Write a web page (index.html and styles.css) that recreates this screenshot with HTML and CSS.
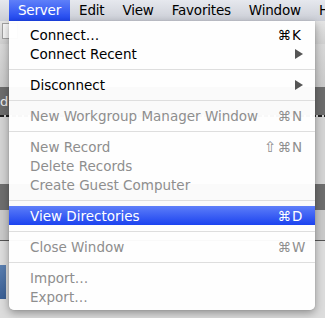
FILE: index.html
```html
<!DOCTYPE html>
<html>
<head>
<meta charset="utf-8">
<link rel="stylesheet" href="styles.css">
</head>
<body>
<div class="menubar">
  <span class="mb-item active">Server</span>
  <span class="mb-item">Edit</span>
  <span class="mb-item">View</span>
  <span class="mb-item">Favorites</span>
  <span class="mb-item">Window</span>
  <span class="mb-item">Help</span>
</div>
<div class="window">
  <div class="band toolbar"><span class="tb-btn"></span></div>
  <div class="band light1"></div>
  <div class="band dark1"><span class="ghost">d</span></div>
  <div class="band dashed"></div>
  <div class="band light2"></div>
  <div class="band dark2"></div>
  <div class="band light3"></div>
  <div class="band light4"><span class="blueblob"></span></div>
</div>

<div class="menu">
  <div class="item"><span class="label">Connect…</span><span class="mods">⌘</span><span class="key">K</span></div>
  <div class="item"><span class="label">Connect Recent</span><span class="mods"></span><span class="key"><svg class="arrow" width="8" height="10" viewBox="0 0 8 10"><path d="M0 0 L8 5 L0 10 Z" fill="#555"/></svg></span></div>
  <div class="sep"></div>
  <div class="item"><span class="label">Disconnect</span><span class="mods"></span><span class="key"><svg class="arrow" width="8" height="10" viewBox="0 0 8 10"><path d="M0 0 L8 5 L0 10 Z" fill="#555"/></svg></span></div>
  <div class="sep"></div>
  <div class="item disabled"><span class="label">New Workgroup Manager Window</span><span class="mods">⌘</span><span class="key">N</span></div>
  <div class="sep"></div>
  <div class="item disabled"><span class="label">New Record</span><span class="mods"><span class="shift">⇧</span>⌘</span><span class="key">N</span></div>
  <div class="item disabled"><span class="label">Delete Records</span><span class="mods"></span><span class="key"></span></div>
  <div class="item disabled"><span class="label">Create Guest Computer</span><span class="mods"></span><span class="key"></span></div>
  <div class="sep"></div>
  <div class="item selected"><span class="label">View Directories</span><span class="mods">⌘</span><span class="key">D</span></div>
  <div class="sep"></div>
  <div class="item disabled"><span class="label">Close Window</span><span class="mods">⌘</span><span class="key">W</span></div>
  <div class="sep"></div>
  <div class="item disabled"><span class="label">Import…</span><span class="mods"></span><span class="key"></span></div>
  <div class="item disabled"><span class="label">Export…</span><span class="mods"></span><span class="key"></span></div>
</div>
</body>
</html>
```
FILE: styles.css
```css
html, body {
  margin: 0;
  padding: 0;
}
body {
  width: 325px;
  height: 318px;
  overflow: hidden;
  position: relative;
  font-family: "DejaVu Sans", "Noto Sans", sans-serif;
  font-size: 13.5px;
  background: #dedede;
}
.menubar {
  height: 21px;
  display: flex;
  align-items: stretch;
  padding-left: 9px;
  background: linear-gradient(#e6e8ee, #cbced6);
  white-space: nowrap;
  box-sizing: border-box;
  overflow: hidden;
}
.mb-item {
  display: flex;
  align-items: center;
  padding: 0 9px;
  color: #000;
  line-height: 21px;
  letter-spacing: -0.2px;
}
.mb-item.active {
  color: #fff;
  background: linear-gradient(#5f80f9, #1d44ef);
}
.window {
  display: flex;
  flex-direction: column;
}
.band { width: 100%; }
.toolbar {
  height: 23px;
  background: linear-gradient(#e4e4e4, #cfcfcf);
  display: flex;
  align-items: flex-start;
}
.tb-btn {
  margin: 2px 0 0 2px;
  width: 14px;
  height: 14px;
  border: 1px solid #a0a0a0;
  background: #f6f6f6;
}
.light1 { height: 43px; background: linear-gradient(#d8d8d8, #c9c9c9); }
.dark1 {
  height: 28px;
  background: #6c6c6c;
  color: #eee;
  display: flex;
  align-items: center;
}
.ghost { font-size: 13px; }
.dashed {
  height: 2px;
  background: repeating-linear-gradient(90deg, #222 0 4px, #d0d0d0 4px 6px);
}
.light2 { height: 67px; background: #d3d3d3; }
.dark2 { height: 26px; background: #6e6e6e; }
.light3 { height: 30px; background: #c9c9c9; border-bottom: 1px solid #555; }
.light4 { height: 80px; background: #dcdcdc; }
.blueblob {
  display: block;
  margin-top: 24px;
  width: 6px;
  height: 34px;
  background: linear-gradient(#5a7fb0, #3a5f94);
}

.menu {
  position: absolute;
  left: 9px;
  top: 21px;
  width: 306px;
  padding: 4px 0;
  box-sizing: border-box;
  background: rgba(255, 255, 255, 0.97);
  border-radius: 0 0 5px 5px;
  box-shadow: 0 3px 8px rgba(0, 0, 0, 0.35), 0 0 1px rgba(0, 0, 0, 0.3);
  color: #000;
}
.item {
  display: grid;
  grid-template-columns: 1fr auto 14px;
  align-items: center;
  height: 19px;
  padding: 0 9px 0 21px;
  white-space: nowrap;
}
.item.disabled { color: #8e8e8e; }
.item.selected {
  color: #fff;
  background: linear-gradient(#5d7ef9, #1c43ef);
}
.mods { text-align: right; padding-right: 1px; }
.shift { font-size: 15px; margin-right: 1px; }
.key { display: flex; align-items: center; }
.arrow { margin-left: 3px; }
.sep {
  height: 12px;
  display: flex;
  align-items: center;
}
.sep::before {
  content: "";
  display: block;
  width: 100%;
  height: 1px;
  background: #dedede;
}
```
